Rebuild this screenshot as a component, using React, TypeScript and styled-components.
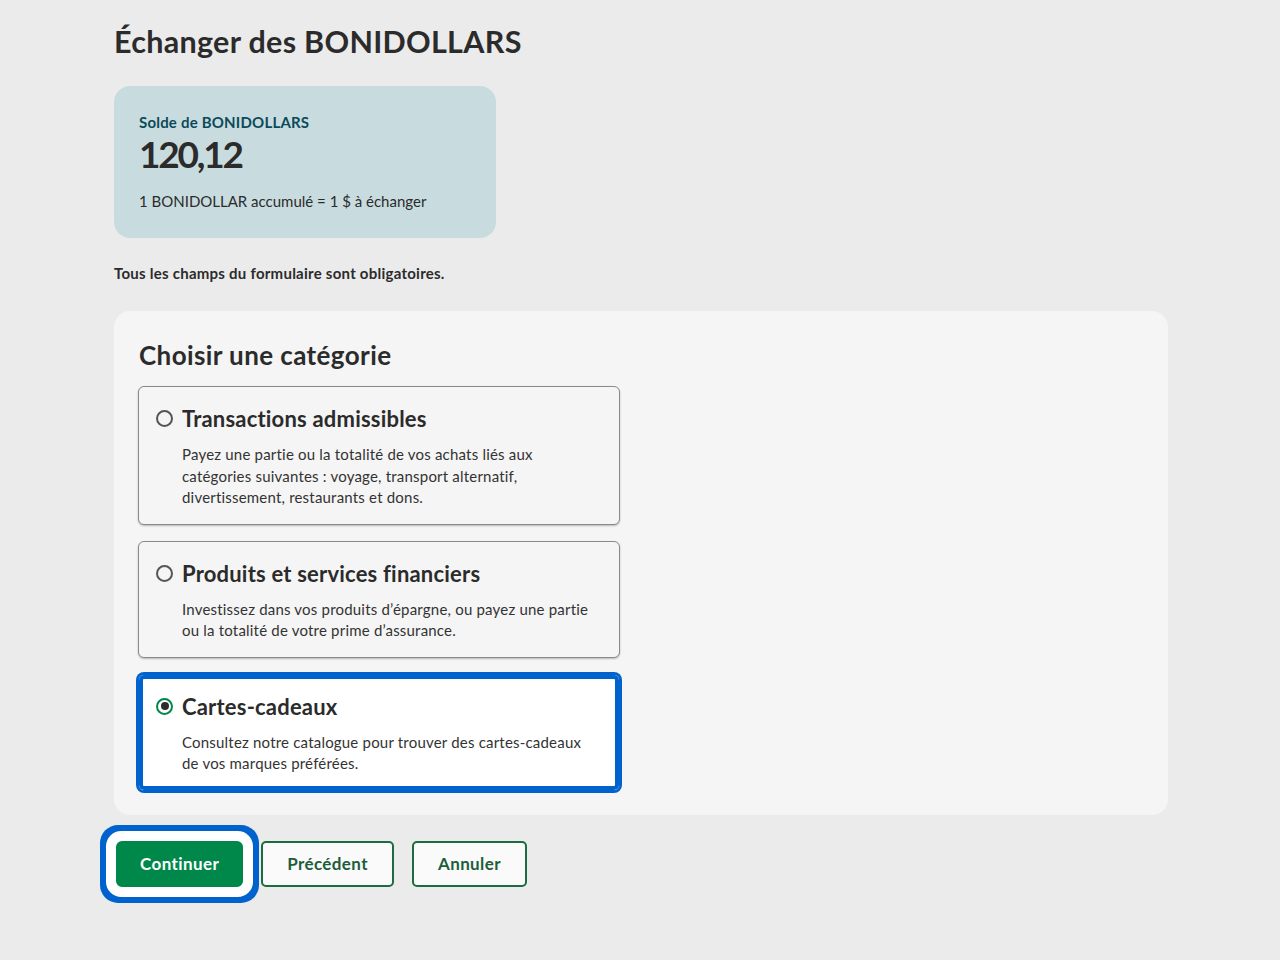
import React, { useState } from 'react';
import styled, { createGlobalStyle } from 'styled-components';

const GlobalStyle = createGlobalStyle`
  body {
    margin: 0;
    background: #ebebeb;
    font-family: Lato, "Noto Sans", sans-serif;
    color: #2b2b2b;
  }
`

const Page = styled.main`
  padding: 22px 112px 40px 114px;
`

const Title = styled.h1`
  margin: 0 0 26px;
  font-size: 30.5px;
  line-height: 38px;
  font-weight: 700;
  letter-spacing: 0.3px;
  color: #2b2b2b;
`

const BalanceCard = styled.section`
  width: 382px;
  box-sizing: border-box;
  padding: 26px 25px 27px;
  border-radius: 16px;
  background: #c8dcdf;
`

const BalanceLabel = styled.div`
  font-size: 15px;
  line-height: 20px;
  font-weight: 700;
  letter-spacing: 0.2px;
  color: #0c4a5a;
`

const BalanceValue = styled.div`
  font-size: 37px;
  line-height: 44px;
  font-weight: 700;
  letter-spacing: -2.2px;
  color: #2b2b2b;
  margin-bottom: 15px;
`

const BalanceNote = styled.div`
  font-size: 15px;
  line-height: 20px;
`

const Required = styled.p`
  margin: 26px 0 28px;
  font-size: 15px;
  line-height: 19px;
  font-weight: 700;
  letter-spacing: 0.25px;
`

const Panel = styled.section`
  background: #f5f5f5;
  border-radius: 16px;
  padding: 27px 25px 24px 24px;
`

const PanelTitle = styled.h2`
  margin: 0 0 14px 1px;
  font-size: 26px;
  line-height: 34px;
  font-weight: 700;
  letter-spacing: 0.4px;
`

const OptionList = styled.div`
  display: flex;
  flex-direction: column;
  gap: 16px;
`

const OptionCard = styled.label<{ $selected: boolean }>`
  width: 482px;
  box-sizing: border-box;
  display: flex;
  gap: 9px;
  padding: 18px 22px 15px 17px;
  border-radius: 6px;
  cursor: pointer;
  background: ${p => (p.$selected ? '#ffffff' : '#f5f5f5')};
  border: 1px solid ${p => (p.$selected ? '#0062cc' : '#8a8a8a')};
  box-shadow: ${p =>
    p.$selected
      ? 'inset 0 0 0 4px #0062cc, 0 0 0 2px #0062cc'
      : '0 1px 2px rgba(0,0,0,0.25)'};
`

const Radio = styled.span<{ $checked: boolean }>`
  flex: none;
  width: 17px;
  height: 17px;
  margin-top: 5px;
  box-sizing: border-box;
  border-radius: 50%;
  border: 2px solid ${p => (p.$checked ? '#00874a' : '#555')};
  display: flex;
  align-items: center;
  justify-content: center;

  &::after {
    content: '';
    width: 8px;
    height: 8px;
    border-radius: 50%;
    background: ${p => (p.$checked ? '#2b2b2b' : 'transparent')};
  }
`

const OptionBody = styled.div`
  display: flex;
  flex-direction: column;
  gap: 11px;
`

const OptionTitle = styled.div`
  font-size: 22px;
  line-height: 28px;
  font-weight: 700;
  letter-spacing: 0.2px;
`

const OptionText = styled.div`
  font-size: 15px;
  line-height: 21.5px;
  letter-spacing: 0.2px;
  color: #333;
`

const Actions = styled.div`
  display: flex;
  gap: 18px;
  margin: 26px 0 0 2px;
`

const Button = styled.button<{ $primary?: boolean; $focused?: boolean }>`
  height: 46px;
  padding: 0 ${p => (p.$primary ? '22px' : '24px')};
  font-family: inherit;
  font-size: 17px;
  font-weight: 700;
  letter-spacing: 0.4px;
  cursor: pointer;
  border: 2px solid ${p => (p.$primary ? '#00874a' : '#1d6b41')};
  background: ${p => (p.$primary ? '#00874a' : '#fafafa')};
  color: ${p => (p.$primary ? '#ffffff' : '#1d5e3a')};
  box-shadow: ${p => (p.$focused ? '0 0 0 10px #ffffff, 0 0 0 16px #0062cc' : 'none')};
  border-radius: ${p => (p.$focused ? '6px' : '5px')};
`

const options = [
  {
    id: 'transactions',
    title: 'Transactions admissibles',
    text: 'Payez une partie ou la totalité de vos achats liés aux catégories suivantes : voyage, transport alternatif, divertissement, restaurants et dons.',
  },
  {
    id: 'produits',
    title: 'Produits et services financiers',
    text: 'Investissez dans vos produits d’épargne, ou payez une partie ou la totalité de votre prime d’assurance.',
  },
  {
    id: 'cartes',
    title: 'Cartes-cadeaux',
    text: 'Consultez notre catalogue pour trouver des cartes-cadeaux de vos marques préférées.',
  },
]

const App = () => {
  const [selected, setSelected] = useState('cartes')

  return (
    <>
      <GlobalStyle />
      <Page>
        <Title>Échanger des BONIDOLLARS</Title>
        <BalanceCard>
          <BalanceLabel>Solde de BONIDOLLARS</BalanceLabel>
          <BalanceValue>120,12</BalanceValue>
          <BalanceNote>1 BONIDOLLAR accumulé = 1 $ à échanger</BalanceNote>
        </BalanceCard>
        <Required>Tous les champs du formulaire sont obligatoires.</Required>
        <Panel>
          <PanelTitle>Choisir une catégorie</PanelTitle>
          <OptionList>
            {options.map(o => (
              <OptionCard
                key={o.id}
                $selected={selected === o.id}
                onClick={() => setSelected(o.id)}
              >
                <Radio $checked={selected === o.id} />
                <OptionBody>
                  <OptionTitle>{o.title}</OptionTitle>
                  <OptionText>{o.text}</OptionText>
                </OptionBody>
              </OptionCard>
            ))}
          </OptionList>
        </Panel>
        <Actions>
          <Button $primary $focused>Continuer</Button>
          <Button>Précédent</Button>
          <Button>Annuler</Button>
        </Actions>
      </Page>
    </>
  )
}

export default App
